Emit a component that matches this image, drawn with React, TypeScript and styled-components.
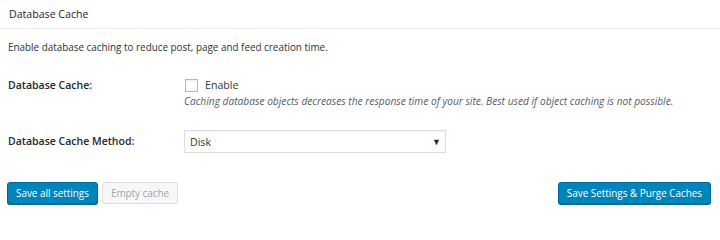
import React from 'react';
import styled, { createGlobalStyle } from 'styled-components';

const GlobalStyle = createGlobalStyle`
  html, body {
    margin: 0;
    padding: 0;
    background: #ffffff;
  }
  body {
    font-family: 'Open Sans', 'Noto Sans', sans-serif;
    color: #23282d;
    width: 720px;
    height: 229px;
    overflow: hidden;
  }
`;

const Wrap = styled.div`
  width: 720px;
  height: 229px;
  background: #ffffff;
`;

//header
const Header = styled.div`
  height: 29px;
  border-bottom: 1px solid #eeeeee;
  display: flex;
  align-items: center;
  padding-left: 9px;
  box-sizing: border-box;
`;
const Title = styled.h3`
  margin: 0;
  font-size: 10.6px;
  font-weight: 400;
  color: #23282d;
`;

const Body = styled.div`
  padding: 10px 8px 0 8px;
`;
const Description = styled.p`
  margin: 0;
  font-size: 9.9px;
  line-height: 16px;
  color: #2c3338;
`;

//settings rows
const Row = styled.div<{ $top: number }>`
  display: grid;
  grid-template-columns: 176px 1fr;
  margin-top: ${(p) => p.$top}px;
`;
const Label = styled.div<{ $tall?: boolean }>`
  font-size: 10.5px;
  font-weight: 600;
  color: #23282d;
  line-height: ${(p) => (p.$tall ? '23px' : '18px')};
`;
const Field = styled.div`
  display: flex;
  flex-direction: column;
`;
const CheckLine = styled.label`
  display: flex;
  align-items: center;
  gap: 7px;
  font-size: 10.6px;
  color: #32373c;
  height: 18px;
`;
const Box = styled.span`
  width: 13px;
  height: 13px;
  margin-left: 1px;
  border: 1px solid #b4b9be;
  box-sizing: border-box;
  background: #fff;
  box-shadow: inset 0 1px 2px rgba(0, 0, 0, 0.08);
`;
const Note = styled.span`
  font-size: 10.2px;
  font-style: italic;
  color: #555d66;
  line-height: 14px;
  white-space: nowrap;
`;
const Select = styled.div`
  width: 262px;
  height: 23px;
  border: 1px solid #dddddd;
  box-sizing: border-box;
  display: flex;
  align-items: center;
  justify-content: space-between;
  padding: 0 4px 0 5px;
  font-size: 10.6px;
  color: #32373c;
  box-shadow: inset 0 1px 2px rgba(0, 0, 0, 0.05);
`;
const Arrow = styled.span`
  font-size: 9px;
  color: #23282d;
`;

//buttons
const Actions = styled.div`
  display: flex;
  align-items: center;
  margin-top: 29px;
  padding: 0 9px 0 7px;
`;
const Button = styled.button<{ $primary?: boolean }>`
  height: 22px;
  padding: 0 8px;
  font-family: inherit;
  font-size: 9.9px;
  border-radius: 3px;
  border: 1px solid ${(p) => (p.$primary ? '#006799' : '#dddddd')};
  background: ${(p) => (p.$primary ? '#0085ba' : '#f7f7f7')};
  color: ${(p) => (p.$primary ? '#ffffff' : '#a0a5aa')};
  box-shadow: ${(p) => (p.$primary ? '0 1px 0 #006799' : 'none')};
  margin-right: 4px;
  cursor: pointer;
  &:last-child {
    margin-right: 0;
  }
`;
const Spacer = styled.div`
  flex: 1;
`;

const App = () => {
  return (
    <Wrap>
      <GlobalStyle />
      <Header>
        <Title>Database Cache</Title>
      </Header>
      <Body>
        <Description>Enable database caching to reduce post, page and feed creation time.</Description>
        <Row $top={21}>
          <Label>Database Cache:</Label>
          <Field>
            <CheckLine>
              <Box />
              Enable
            </CheckLine>
            <Note>
              Caching database objects decreases the response time of your site. Best used if object caching is not
              possible.
            </Note>
          </Field>
        </Row>
        <Row $top={22}>
          <Label $tall>Database Cache Method:</Label>
          <Select>
            Disk
            <Arrow>▼</Arrow>
          </Select>
        </Row>
      </Body>
      <Actions>
        <Button $primary>Save all settings</Button>
        <Button disabled>Empty cache</Button>
        <Spacer />
        <Button $primary>Save Settings &amp; Purge Caches</Button>
      </Actions>
    </Wrap>
  );
};

export default App;
